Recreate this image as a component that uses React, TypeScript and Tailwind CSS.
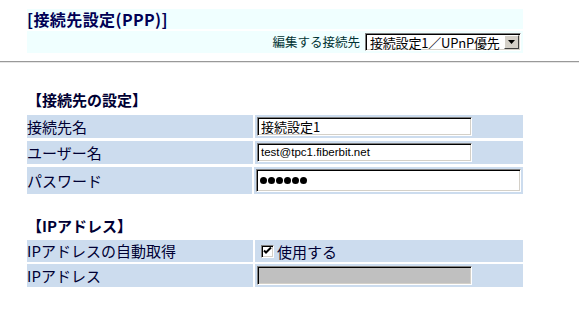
import React from "react";

const inset =
  "border border-t-[#808080] border-l-[#808080] border-r-[#ffffff] border-b-[#ffffff] shadow-[inset_1px_1px_0_#000000,inset_-1px_-1px_0_#d4d0c8]";

function Field({ w, h, children, bg = "bg-white" }: { w: string; h: string; children?: React.ReactNode; bg?: string }) {
  return (
    <div className={`${w} ${h} ${bg} ${inset} flex items-center pl-[3px] overflow-hidden`}>{children}</div>
  );
}

export default function App() {
  return (
    <div className="w-[579px] h-[309px] bg-white overflow-hidden font-['Noto_Sans_CJK_JP',sans-serif]">
      <div className="pt-[9px] pl-[27px] w-[523px]">
        <div className="h-[20px] bg-[#f0ffff] text-[16px] font-bold text-[#000055] leading-[20px] tracking-[0.4px]">
          [接続先設定(PPP)]
        </div>
        <div className="mt-[2px] h-[22px] bg-[#f0ffff] flex items-center justify-end pr-[2px]">
          <span className="text-[12.5px] text-[#003333] mr-[5px] leading-none">編集する接続先</span>
          <div className={`w-[156px] h-[18px] bg-white ${inset} flex items-center justify-between pl-[4px] pr-[1px]`}>
            <span className="text-[13px] leading-none text-black whitespace-nowrap tracking-[-0.2px]">接続設定1／UPnP優先</span>
            <div className="w-[15px] h-[14px] bg-[#d4d0c8] border border-t-[#ffffff] border-l-[#ffffff] border-r-[#404040] border-b-[#404040] flex items-center justify-center">
              <svg width="7" height="4" viewBox="0 0 7 4">
                <path d="M0 0H7L3.5 4Z" fill="#000" />
              </svg>
            </div>
          </div>
        </div>
      </div>

      <div className="mt-[8px] h-[2px] border-t border-t-[#999999] border-b border-b-[#e6e6e6]" />

      <div className="pl-[27px] w-[523px]">
        <div className="mt-[27px] text-[15px] font-bold text-[#000033] leading-[20px] h-[20px]">【接続先の設定】</div>
        <div className="mt-[5px] flex flex-col gap-[3px]">
          <div className="flex gap-[2px] h-[23px]">
            <div className="w-[226px] bg-[#ccdcee] text-[15px] text-[#000033] leading-[23px]">接続先名</div>
            <div className="flex-1 bg-[#ccdcee] flex items-center pl-[2px]">
              <Field w="w-[215px]" h="h-[19px]">
                <span className="text-[13px] leading-none text-black">接続設定1</span>
              </Field>
            </div>
          </div>
          <div className="flex gap-[2px] h-[23px]">
            <div className="w-[226px] bg-[#ccdcee] text-[15px] text-[#000033] leading-[23px]">ユーザー名</div>
            <div className="flex-1 bg-[#ccdcee] flex items-center pl-[2px]">
              <Field w="w-[215px]" h="h-[19px]">
                <span className="text-[11.5px] leading-none text-black font-['Liberation_Sans',sans-serif]">test@tpc1.fiberbit.net</span>
              </Field>
            </div>
          </div>
          <div className="flex gap-[2px] h-[27px]">
            <div className="w-[226px] bg-[#ccdcee] text-[15px] text-[#000033] leading-[27px]">パスワード</div>
            <div className="flex-1 bg-[#ccdcee] flex items-center pl-[2px] pr-[2px]">
              <Field w="w-[265px]" h="h-[23px]">
                <div className="flex gap-[1px]">
                  {[0, 1, 2, 3, 4, 5].map((i) => (
                    <span key={i} className="w-[7px] h-[7px] rounded-full bg-black inline-block" />
                  ))}
                </div>
              </Field>
            </div>
          </div>
        </div>

        <div className="mt-[22px] text-[15px] font-bold text-[#000033] leading-[20px] h-[20px]">【IPアドレス】</div>
        <div className="mt-[4px] flex flex-col gap-[2px]">
          <div className="flex gap-[2px] h-[22px]">
            <div className="w-[226px] bg-[#ccdcee] text-[15px] text-[#000033] leading-[22px]">IPアドレスの自動取得</div>
            <div className="flex-1 bg-[#ccdcee] flex items-center pl-[6px]">
              <div className={`w-[13px] h-[13px] bg-white ${inset} flex items-center justify-center`}>
                <svg width="9" height="8" viewBox="0 0 9 8">
                  <path d="M1 3.5L3 5.5L8 0.5" stroke="#000" strokeWidth="2" fill="none" />
                </svg>
              </div>
              <span className="ml-[3px] text-[15px] text-[#000033] leading-none">使用する</span>
            </div>
          </div>
          <div className="flex gap-[2px] h-[23px]">
            <div className="w-[226px] bg-[#ccdcee] text-[15px] text-[#000033] leading-[23px]">IPアドレス</div>
            <div className="flex-1 bg-[#ccdcee] flex items-center pl-[2px]">
              <Field w="w-[215px]" h="h-[19px]" bg="bg-[#c0c0c0]" />
            </div>
          </div>
        </div>
      </div>
    </div>
  );
}
